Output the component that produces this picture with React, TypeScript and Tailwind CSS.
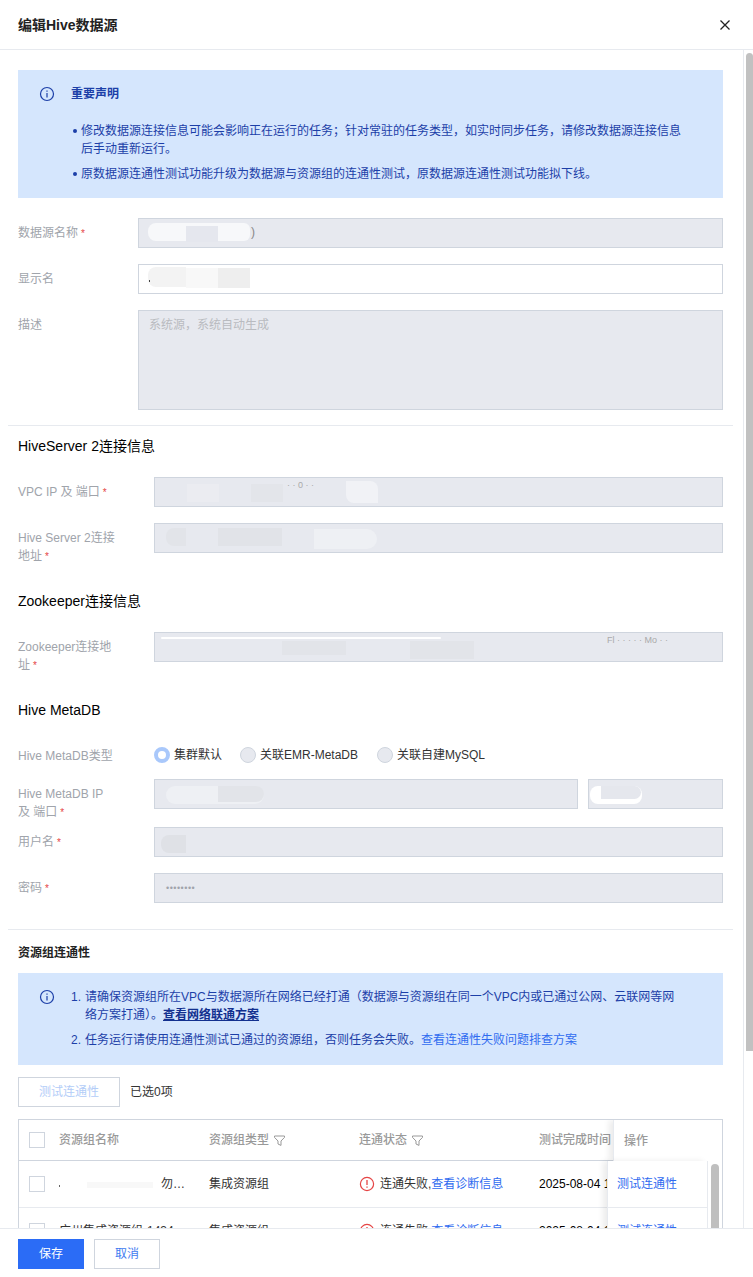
import React from 'react'

const FONT = '"Liberation Sans", "Noto Sans CJK SC", sans-serif'

function InfoIcon() {
  return (
    <svg width="16" height="16" viewBox="0 0 16 16" fill="none" className="shrink-0">
      <circle cx="8" cy="8" r="6.5" stroke="#1c3fa8" strokeWidth="1.2" />
      <path d="M8 4.6v1.2M8 7v4.4" stroke="#1c3fa8" strokeWidth="1.2" />
    </svg>
  )
}

function FilterIcon() {
  return (
    <svg width="13" height="13" viewBox="0 0 13 13" fill="none" className="shrink-0">
      <path d="M1.5 2h10v1.4L8 7v4.4L5 10V7L1.5 3.4V2z" stroke="#999" strokeWidth="1" />
    </svg>
  )
}

function ErrorIcon() {
  return (
    <svg width="16" height="16" viewBox="0 0 16 16" fill="none" className="shrink-0">
      <circle cx="8" cy="8" r="6.6" stroke="#e54545" strokeWidth="1.2" />
      <path d="M8 4v5M8 10.4v1.4" stroke="#e54545" strokeWidth="1.3" />
    </svg>
  )
}

function Smudge({ className }: { className: string }) {
  return <div className={`absolute ${className}`} />
}

function Label({ text, required, width }: { text: string; required?: boolean; width: string }) {
  return (
    <div className={`${width} shrink-0 pt-[6px] pr-[36px] text-xs leading-[18px] text-[#a0a4ab]`}>
      {text}
      {required && <span className="ml-[3px] text-[10px] text-[#e54545]">*</span>}
    </div>
  )
}

function InputBox({ className = '', children }: { className?: string; children?: React.ReactNode }) {
  return (
    <div className={`relative h-[30px] min-w-0 flex-1 overflow-hidden border border-[#cfd5de] bg-[#e7e9ef] text-xs ${className}`}>
      {children}
    </div>
  )
}

function Field({
  label,
  required,
  width = 'w-[136px]',
  className = '',
  children,
}: {
  label: string
  required?: boolean
  width?: string
  className?: string
  children: React.ReactNode
}) {
  return (
    <div className={`flex h-[30px] ${className}`}>
      <Label text={label} required={required} width={width} />
      {children}
    </div>
  )
}

function SectionTitle({ children, className = '' }: { children: React.ReactNode; className?: string }) {
  return <div className={`h-5 text-sm leading-5 text-black ${className}`}>{children}</div>
}

function Radio({ label, checked }: { label: string; checked?: boolean }) {
  return (
    <div className="flex items-center gap-1 text-xs text-[#333]">
      <span
        className={
          checked
            ? 'h-4 w-4 rounded-full border-4 border-[#a9c8fb] bg-white'
            : 'h-4 w-4 rounded-full border border-[#cfd5de] bg-[#e7e9ef]'
        }
      />
      {label}
    </div>
  )
}

function Checkbox() {
  return <span className="h-4 w-4 shrink-0 border border-[#cfd5de] bg-white" />
}

function ResourceRow({ name, masked }: { name: string; masked?: boolean }) {
  return (
    <div className="flex h-[47px] items-center border-b border-[#e7eaef] text-xs text-[#333]">
      <div className="flex w-[40px] shrink-0 justify-end pr-[14px] pl-[10px]">
        <Checkbox />
      </div>
      <div className={masked ? 'relative w-[150px] shrink-0 pl-[102px]' : 'w-[150px] shrink-0'}>
        {masked && <Smudge className="top-[6px] left-[28px] h-[6px] w-[66px] bg-[#f8f8f8]" />}
        {masked && <Smudge className="top-[9px] left-0 h-[2px] w-px bg-[#666]" />}
        {name}
      </div>
      <div className="w-[150px] shrink-0">集成资源组</div>
      <div className="flex w-[180px] shrink-0 items-center gap-[5px]">
        <ErrorIcon />
        <span>
          连通失败,<span className="text-[#2f6bf0]">查看诊断信息</span>
        </span>
      </div>
      <div className="whitespace-nowrap text-black">2025-08-04 12:30:18</div>
    </div>
  )
}

export default function App() {
  return (
    <div className="flex h-[1277px] w-[753px] flex-col overflow-hidden bg-white" style={{ fontFamily: FONT }}>
      <div className="flex h-[50px] shrink-0 items-center justify-between border-b border-[#e7eaef] pr-[22px] pl-[18px]">
        <div className="text-sm font-semibold text-[#222]">编辑Hive数据源</div>
        <svg width="12" height="12" viewBox="0 0 12 12" fill="none">
          <path d="M1.5 1.5l9 9M10.5 1.5l-9 9" stroke="#222" strokeWidth="1.3" />
        </svg>
      </div>

      <div className="flex min-h-0 flex-1">
        <div className="min-w-0 flex-1 overflow-hidden pt-5 pr-5 pl-[18px]">
          <div className="h-[128px] bg-[#d5e6fd] pt-[15px] pl-[21px] text-xs leading-[18px] text-[#1c3fa8]">
            <div className="flex items-center gap-[16px]">
              <InfoIcon />
              <span className="font-semibold">重要声明</span>
            </div>
            <ul className="mt-[19px] ml-[42px] w-[605px] space-y-[7px]">
              <li className="relative">
                <span className="absolute top-[7px] left-[-8px] h-1 w-1 rounded-full bg-[#1c3fa8]" />
                修改数据源连接信息可能会影响正在运行的任务；针对常驻的任务类型，如实时同步任务，请修改数据源连接信息后手动重新运行。
              </li>
              <li className="relative">
                <span className="absolute top-[7px] left-[-8px] h-1 w-1 rounded-full bg-[#1c3fa8]" />
                原数据源连通性测试功能升级为数据源与资源组的连通性测试，原数据源连通性测试功能拟下线。
              </li>
            </ul>
          </div>

          <Field label="数据源名称" required width="w-[120px]" className="mt-5">
            <InputBox>
              <Smudge className="top-[4px] left-[9px] h-[18px] w-[102px] rounded-l-lg rounded-r-md bg-[#f7f8fa]" />
              <Smudge className="top-[7px] left-[47px] h-[16px] w-[32px] bg-[#e5e7ee]" />
              <span className="absolute top-[5px] left-[112px] text-[#888]">)</span>
            </InputBox>
          </Field>
          <Field label="显示名" width="w-[120px]" className="mt-4">
            <InputBox className="bg-white">
              <Smudge className="top-[2px] left-[9px] h-[20px] w-[38px] rounded-l-lg bg-[#f3f3f3]" />
              <Smudge className="top-[3px] left-[47px] h-[20px] w-[32px] bg-[#f8f8f8]" />
              <Smudge className="top-[3px] left-[79px] h-[20px] w-[32px] bg-[#eeeeee]" />
              <Smudge className="top-[15px] left-[10px] h-[2px] w-px bg-[#444]" />
            </InputBox>
          </Field>
          <div className="mt-4 flex h-[100px]">
            <Label text="描述" width="w-[120px]" />
            <div className="min-w-0 flex-1 border border-[#cfd5de] bg-[#e7e9ef] px-[10px] pt-[5px] text-xs leading-[18px] text-[#b9bbc0]">
              系统源，系统自动生成
            </div>
          </div>

          <div className="mt-[15px] -mr-[10px] -ml-[10px] border-t border-[#e7eaef]" />

          <SectionTitle className="mt-[10px]">HiveServer 2连接信息</SectionTitle>
          <Field label="VPC IP 及 端口" required className="mt-[21px]">
            <InputBox>
              <Smudge className="top-[6px] left-[32px] h-[18px] w-[32px] bg-[#ebecf1]" />
              <Smudge className="top-[6px] left-[96px] h-[18px] w-[32px] bg-[#e3e5ea]" />
              <Smudge className="top-[3px] left-[191px] h-[22px] w-[32px] rounded-tr-lg rounded-bl-lg bg-[#f1f2f6]" />
              <span className="absolute top-[1px] left-[132px] text-[9px] text-[#aaa]">· · 0 · ·</span>
            </InputBox>
          </Field>
          <Field label="Hive Server 2连接地址" required className="mt-4">
            <InputBox>
              <Smudge className="top-[4px] left-[11px] h-[18px] w-[20px] rounded-l-lg bg-[#e2e4e9]" />
              <Smudge className="top-[4px] left-[63px] h-[18px] w-[64px] bg-[#e1e3e8]" />
              <Smudge className="top-[5px] left-[159px] h-[20px] w-[63px] rounded-r-xl bg-[#eef0f4]" />
            </InputBox>
          </Field>

          <SectionTitle className="mt-[38px]">Zookeeper连接信息</SectionTitle>
          <Field label="Zookeeper连接地址" required className="mt-[21px]">
            <InputBox>
              <Smudge className="top-[4px] left-[6px] h-[2px] w-[280px] rounded-full bg-white" />
              <Smudge className="top-[8px] left-[127px] h-[14px] w-[64px] bg-[#e2e4e9]" />
              <Smudge className="top-[8px] left-[255px] h-[18px] w-[64px] bg-[#e2e4e9]" />
              <span className="absolute top-[1px] left-[452px] text-[9px] text-[#aaa]">Fl · · · · · Mo · ·</span>
            </InputBox>
          </Field>

          <SectionTitle className="mt-[38px]">Hive MetaDB</SectionTitle>
          <div className="mt-[25px] flex h-5">
            <div className="w-[136px] shrink-0 pt-[2px] text-xs leading-[18px] text-[#a0a4ab]">Hive MetaDB类型</div>
            <div className="flex items-center gap-[18px]">
              <Radio label="集群默认" checked />
              <Radio label="关联EMR-MetaDB" />
              <div className="ml-px">
                <Radio label="关联自建MySQL" />
              </div>
            </div>
          </div>
          <Field label="Hive MetaDB IP 及 端口" required className="mt-[14px]">
            <div className="flex min-w-0 flex-1 gap-[10px]">
              <InputBox>
                <Smudge className="top-[6px] left-[11px] h-[18px] w-[98px] rounded-xl bg-[#eef0f4]" />
                <Smudge className="top-[6px] left-[63px] h-[16px] w-[46px] rounded-r-xl bg-[#e2e4e9]" />
              </InputBox>
              <InputBox className="w-[135px] flex-none">
                <Smudge className="top-[6px] left-[1px] h-[18px] w-[52px] rounded-lg bg-white" />
                <Smudge className="top-[6px] left-[12px] h-[13px] w-[40px] rounded-r-lg bg-[#e5e7ed]" />
              </InputBox>
            </div>
          </Field>
          <Field label="用户名" required className="mt-[18px]">
            <InputBox>
              <Smudge className="top-[7px] left-[6px] h-[18px] w-[25px] rounded-l-lg bg-[#dfe1e6]" />
            </InputBox>
          </Field>
          <Field label="密码" required className="mt-4">
            <InputBox>
              <span className="absolute top-[7px] left-[11px] text-[9px] leading-[14px] tracking-[0.5px] text-[#a0a3ab]">••••••••</span>
            </InputBox>
          </Field>

          <div className="mt-[26px] -mr-[10px] -ml-[10px] border-t border-[#e7eaef]" />

          <div className="mt-[14px] h-[18px] text-xs leading-[18px] font-semibold text-[#222]">资源组连通性</div>

          <div className="mt-[11px] flex h-[92px] gap-[16px] bg-[#d5e6fd] pt-[15px] pl-[21px] text-xs leading-[18px] text-[#1c3fa8]">
            <div className="pt-[1px]">
              <InfoIcon />
            </div>
            <ol className="w-[610px] space-y-[7px]">
              <li className="flex">
                <span className="w-[14px] shrink-0">1.</span>
                <span>
                  请确保资源组所在VPC与数据源所在网络已经打通（数据源与资源组在同一个VPC内或已通过公网、云联网等网络方案打通）。
                  <span className="font-semibold text-[#12308f] underline">查看网络联通方案</span>
                </span>
              </li>
              <li className="flex">
                <span className="w-[14px] shrink-0">2.</span>
                <span>
                  任务运行请使用连通性测试已通过的资源组，否则任务会失败。
                  <span className="text-[#2f6bf0]">查看连通性失败问题排查方案</span>
                </span>
              </li>
            </ol>
          </div>

          <div className="mt-3 flex items-center gap-[10px] text-xs">
            <div className="flex h-[30px] w-[102px] items-center justify-center border border-[#cfd5de] text-[#b3cdf8]">测试连通性</div>
            <span className="text-[#333]">已选0项</span>
          </div>

          <div className="relative mt-3 h-[160px] overflow-hidden border border-[#cfd5de]">
            <div className="flex h-[41px] items-center border-b border-[#cfd5de] text-xs font-medium text-[#999]">
              <div className="flex w-[40px] shrink-0 justify-end pr-[14px] pl-[10px]">
                <Checkbox />
              </div>
              <div className="w-[150px] shrink-0">资源组名称</div>
              <div className="flex w-[150px] shrink-0 items-center gap-1">
                资源组类型
                <FilterIcon />
              </div>
              <div className="flex w-[180px] shrink-0 items-center gap-1">
                连通状态
                <FilterIcon />
              </div>
              <div className="whitespace-nowrap">测试完成时间</div>
            </div>
            <ResourceRow name="勿…" masked />
            <ResourceRow name="广州集成资源组-1434…" />

            {/* 操作列固定在右侧，盖在横向滚动内容上 */}
            <div className="absolute top-0 right-0 flex h-[41px] w-[109px] items-center border-l border-[#e7eaef] bg-white pl-[10px] text-xs font-medium text-[#999] shadow-[-4px_0_6px_rgba(0,0,0,0.08)]">
              操作
            </div>
            <div className="absolute top-[41px] right-0 flex w-[115px]">
              <div className="w-[100px] border-l border-[#e7eaef] bg-white text-xs text-[#2f6bf0] shadow-[-4px_0_6px_rgba(0,0,0,0.08)]">
                <div className="flex h-[47px] items-center border-b border-[#e7eaef] pl-[9px]">测试连通性</div>
                <div className="flex h-[47px] items-center border-b border-[#e7eaef] pl-[9px]">测试连通性</div>
              </div>
              <div className="h-[120px] w-[15px] border-l border-[#e7eaef] bg-white pt-[3px] pl-[3px]">
                <div className="h-[110px] w-2 rounded-full bg-[#bfbfbf]" />
              </div>
            </div>
          </div>
        </div>

        <div className="w-[10px] shrink-0 border-l border-[#e7eaef] pt-[3px] pl-[2px]">
          <div className="h-[998px] w-[7px] rounded-t-md bg-[#c1c1c1]" />
        </div>
      </div>

      <div className="flex h-[49px] shrink-0 items-start gap-[10px] border-t border-[#e7eaef] pt-[10px] pl-[18px] text-xs">
        <div className="flex h-[30px] w-[66px] items-center justify-center bg-[#2b6cf6] text-white">保存</div>
        <div className="flex h-[30px] w-[66px] items-center justify-center border border-[#cfd5de] text-[#3e7bf0]">取消</div>
      </div>
    </div>
  )
}
